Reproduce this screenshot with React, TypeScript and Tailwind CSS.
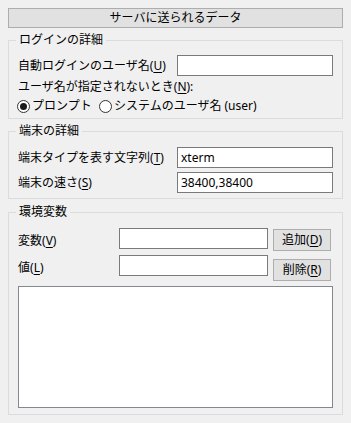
import React from 'react';

const FONT = '"Noto Sans", "Noto Sans CJK JP", sans-serif';

// ラベル内のアクセラレータキー (下線付き)
const Label: React.FC<{ text: string; accel?: string; suffix?: string }> = ({ text, accel, suffix }) => (
  <span className="text-[12px] leading-[16px] text-black whitespace-nowrap">
    {text}
    {accel && (
      <>
        (<span className="underline underline-offset-[2px]">{accel}</span>)
      </>
    )}
    {suffix}
  </span>
);

const Group: React.FC<{ title: string; className?: string; children: React.ReactNode }> = ({
  title,
  className = '',
  children,
}) => (
  <fieldset className={`border border-[#dcdcdc] pl-[9px] pr-[9px] ${className}`}>
    <legend className="-ml-[2px] px-[3px] text-[12px] leading-[16px] text-black">{title}</legend>
    {children}
  </fieldset>
);

const TextBox: React.FC<{ value?: string; className?: string }> = ({ value = '', className = '' }) => (
  <input
    readOnly
    value={value}
    className={`h-[21px] border border-[#7a7a7a] bg-white px-[3px] text-[12px] text-black outline-none ${className}`}
    style={{ fontFamily: FONT }}
  />
);

const Radio: React.FC<{ checked?: boolean }> = ({ checked }) => (
  <svg width="13" height="13" viewBox="0 0 13 13" className="shrink-0">
    <circle cx="6.5" cy="6.5" r="6" fill="white" stroke="#333333" strokeWidth="1" />
    {checked && <circle cx="6.5" cy="6.5" r="3.5" fill="#1a1a1a" />}
  </svg>
);

const SmallButton: React.FC<{ text: string; accel: string }> = ({ text, accel }) => (
  <button className="h-[22px] w-[58px] border border-[#adadad] bg-[#e1e1e1] flex items-center justify-center">
    <Label text={text} accel={accel} />
  </button>
);

export default function App() {
  return (
    <div
      className="w-[351px] h-[423px] bg-[#f0f0f0] px-[8px] pt-[8px] text-black"
      style={{ fontFamily: FONT }}
    >
      <button className="w-full h-[20px] border border-[#adadad] bg-[#e1e1e1] flex items-center justify-center">
        <Label text="サーバに送られるデータ" />
      </button>

      <Group title="ログインの詳細" className="mt-[4px] pb-[4px]">
        <div className="mt-[7px] h-[21px] flex items-center justify-between">
          <Label text="自動ログインのユーザ名" accel="U" />
          <TextBox className="w-[156px]" />
        </div>
        <div className="mt-[3px] h-[16px] flex items-center">
          <Label text="ユーザ名が指定されないとき" accel="N" suffix=":" />
        </div>
        <div className="mt-[3px] h-[16px] flex items-center -ml-[1px]">
          <div className="w-[82px] flex items-center gap-[2px]">
            <Radio checked />
            <Label text="プロンプト" />
          </div>
          <div className="flex items-center gap-[2px]">
            <Radio />
            <Label text="システムのユーザ名 (user)" />
          </div>
        </div>
      </Group>

      <Group title="端末の詳細" className="mt-[4px] pb-[5px]">
        <div className="mt-[8px] h-[21px] flex items-center justify-between">
          <Label text="端末タイプを表す文字列" accel="T" />
          <TextBox value="xterm" className="w-[156px]" />
        </div>
        <div className="mt-[4px] h-[21px] flex items-center justify-between">
          <Label text="端末の速さ" accel="S" />
          <TextBox value="38400,38400" className="w-[156px]" />
        </div>
      </Group>

      <Group title="環境変数" className="mt-[5px] pb-[6px]">
        <div className="mt-[8px] flex">
          <div className="flex flex-col gap-[6px]">
            <div className="h-[21px] flex items-center">
              <div className="w-[101px]">
                <Label text="変数" accel="V" />
              </div>
              <TextBox className="w-[149px]" />
            </div>
            <div className="h-[21px] flex items-center">
              <div className="w-[101px]">
                <Label text="値" accel="L" />
              </div>
              <TextBox className="w-[149px]" />
            </div>
          </div>
          <div className="ml-[5px] pt-[1px] flex flex-col gap-[8px]">
            <SmallButton text="追加" accel="D" />
            <SmallButton text="削除" accel="R" />
          </div>
        </div>
        <div className="mt-[5px] h-[122px] border border-[#828790] bg-white" />
      </Group>
    </div>
  );
}
